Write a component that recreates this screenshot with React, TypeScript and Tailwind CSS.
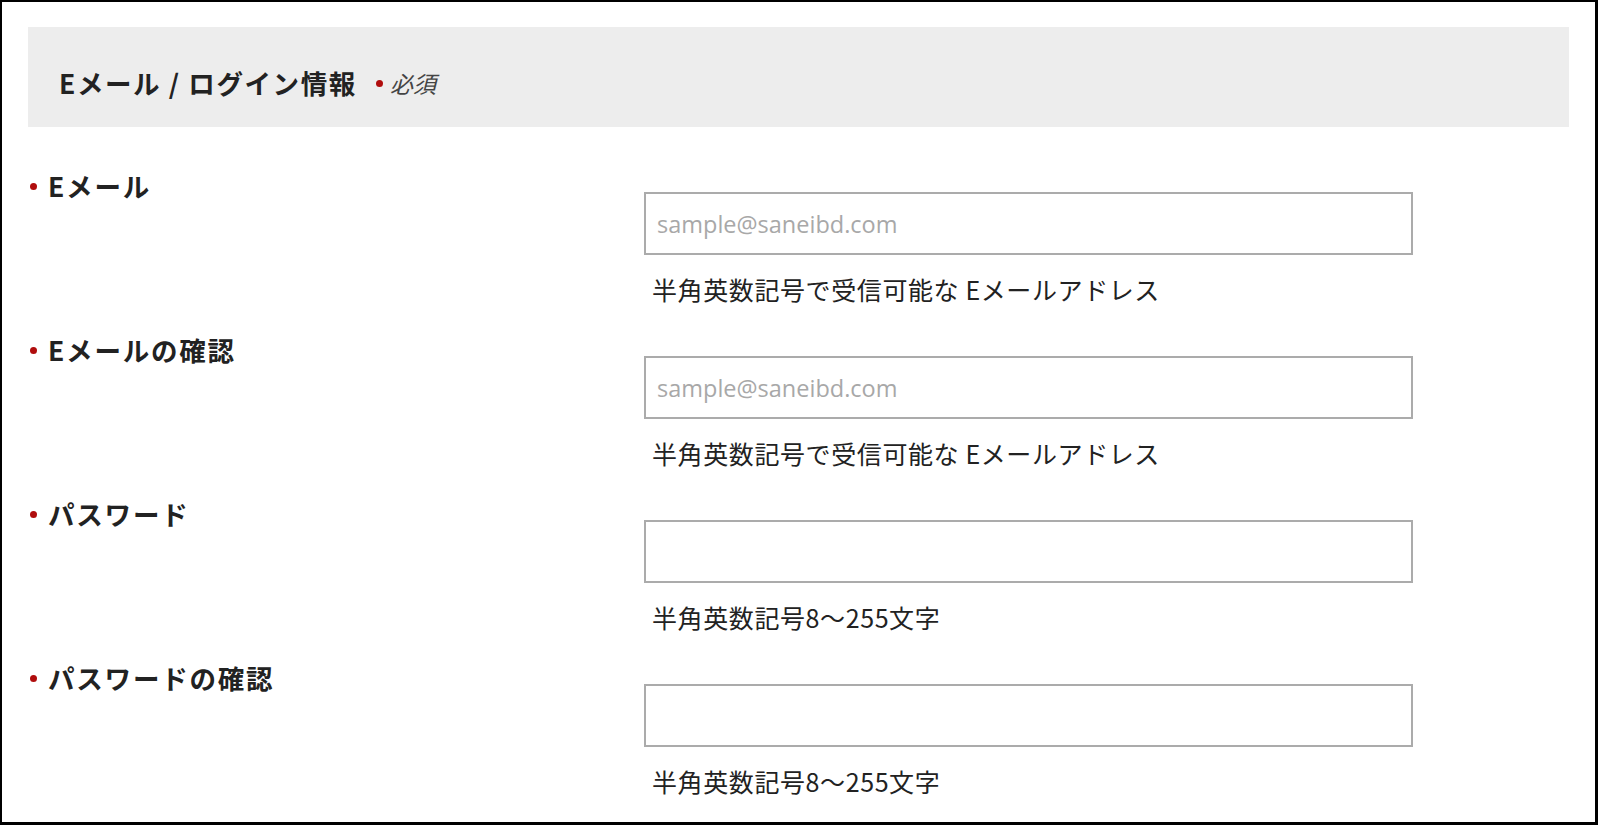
const font = { fontFamily: '"Open Sans", "Noto Sans CJK JP", sans-serif' };

type Field = { label: string; placeholder?: string; help: string; type: string };

const fields: Field[] = [
  { label: 'Eメール', placeholder: 'sample@saneibd.com', help: '半角英数記号で受信可能な Eメールアドレス', type: 'email' },
  { label: 'Eメールの確認', placeholder: 'sample@saneibd.com', help: '半角英数記号で受信可能な Eメールアドレス', type: 'email' },
  { label: 'パスワード', help: '半角英数記号8〜255文字', type: 'password' },
  { label: 'パスワードの確認', help: '半角英数記号8〜255文字', type: 'password' },
];

function Dot() {
  return <span className="inline-block w-[7px] h-[7px] rounded-full bg-[#b00d0d] shrink-0" />;
}

function FieldRow({ field }: { field: Field }) {
  return (
    <div className="flex mb-[25px]">
      <div className="w-[616px] shrink-0 flex items-center h-[36px] pl-[2px]">
        <Dot />
        <span className="ml-[11px] text-[26.5px] font-bold text-[#222] tracking-[1.8px] leading-[36px] font-['Noto_Sans_CJK_JP']">
          {field.label}
        </span>
      </div>
      <div className="pt-[24px]">
        <input
          type={field.type}
          placeholder={field.placeholder}
          className="block w-[769px] h-[63px] border-2 border-[#ababab] bg-white px-[11px] text-[23.5px] text-[#333] placeholder:text-[#a8a8a8] outline-none"
          style={font}
        />
        <p className="mt-[16px] pl-[8px] text-[25px] leading-[36px] text-[#222] tracking-[0.6px] font-['Noto_Sans_CJK_JP']">
          {field.help}
        </p>
      </div>
    </div>
  );
}

export default function App() {
  return (
    <div className="w-[1598px] h-[825px] border-[3px] border-t-2 border-l-2 border-black bg-white overflow-hidden px-[26px] pt-[25px]">
      <div className="h-[100px] bg-[#ededed] flex items-center pl-[31px] pt-[12px]">
        <h2 className="text-[26.5px] font-bold text-[#222] tracking-[1.6px] font-['Noto_Sans_CJK_JP']">
          Eメール / ログイン情報
        </h2>
        <span className="ml-[19px] flex items-center">
          <Dot />
          <span className="ml-[7px] text-[23px] italic text-[#444] font-['Noto_Sans_CJK_JP']">必須</span>
        </span>
      </div>
      <div className="mt-[41px]">
        {fields.map((f) => (
          <FieldRow key={f.label} field={f} />
        ))}
      </div>
    </div>
  );
}
